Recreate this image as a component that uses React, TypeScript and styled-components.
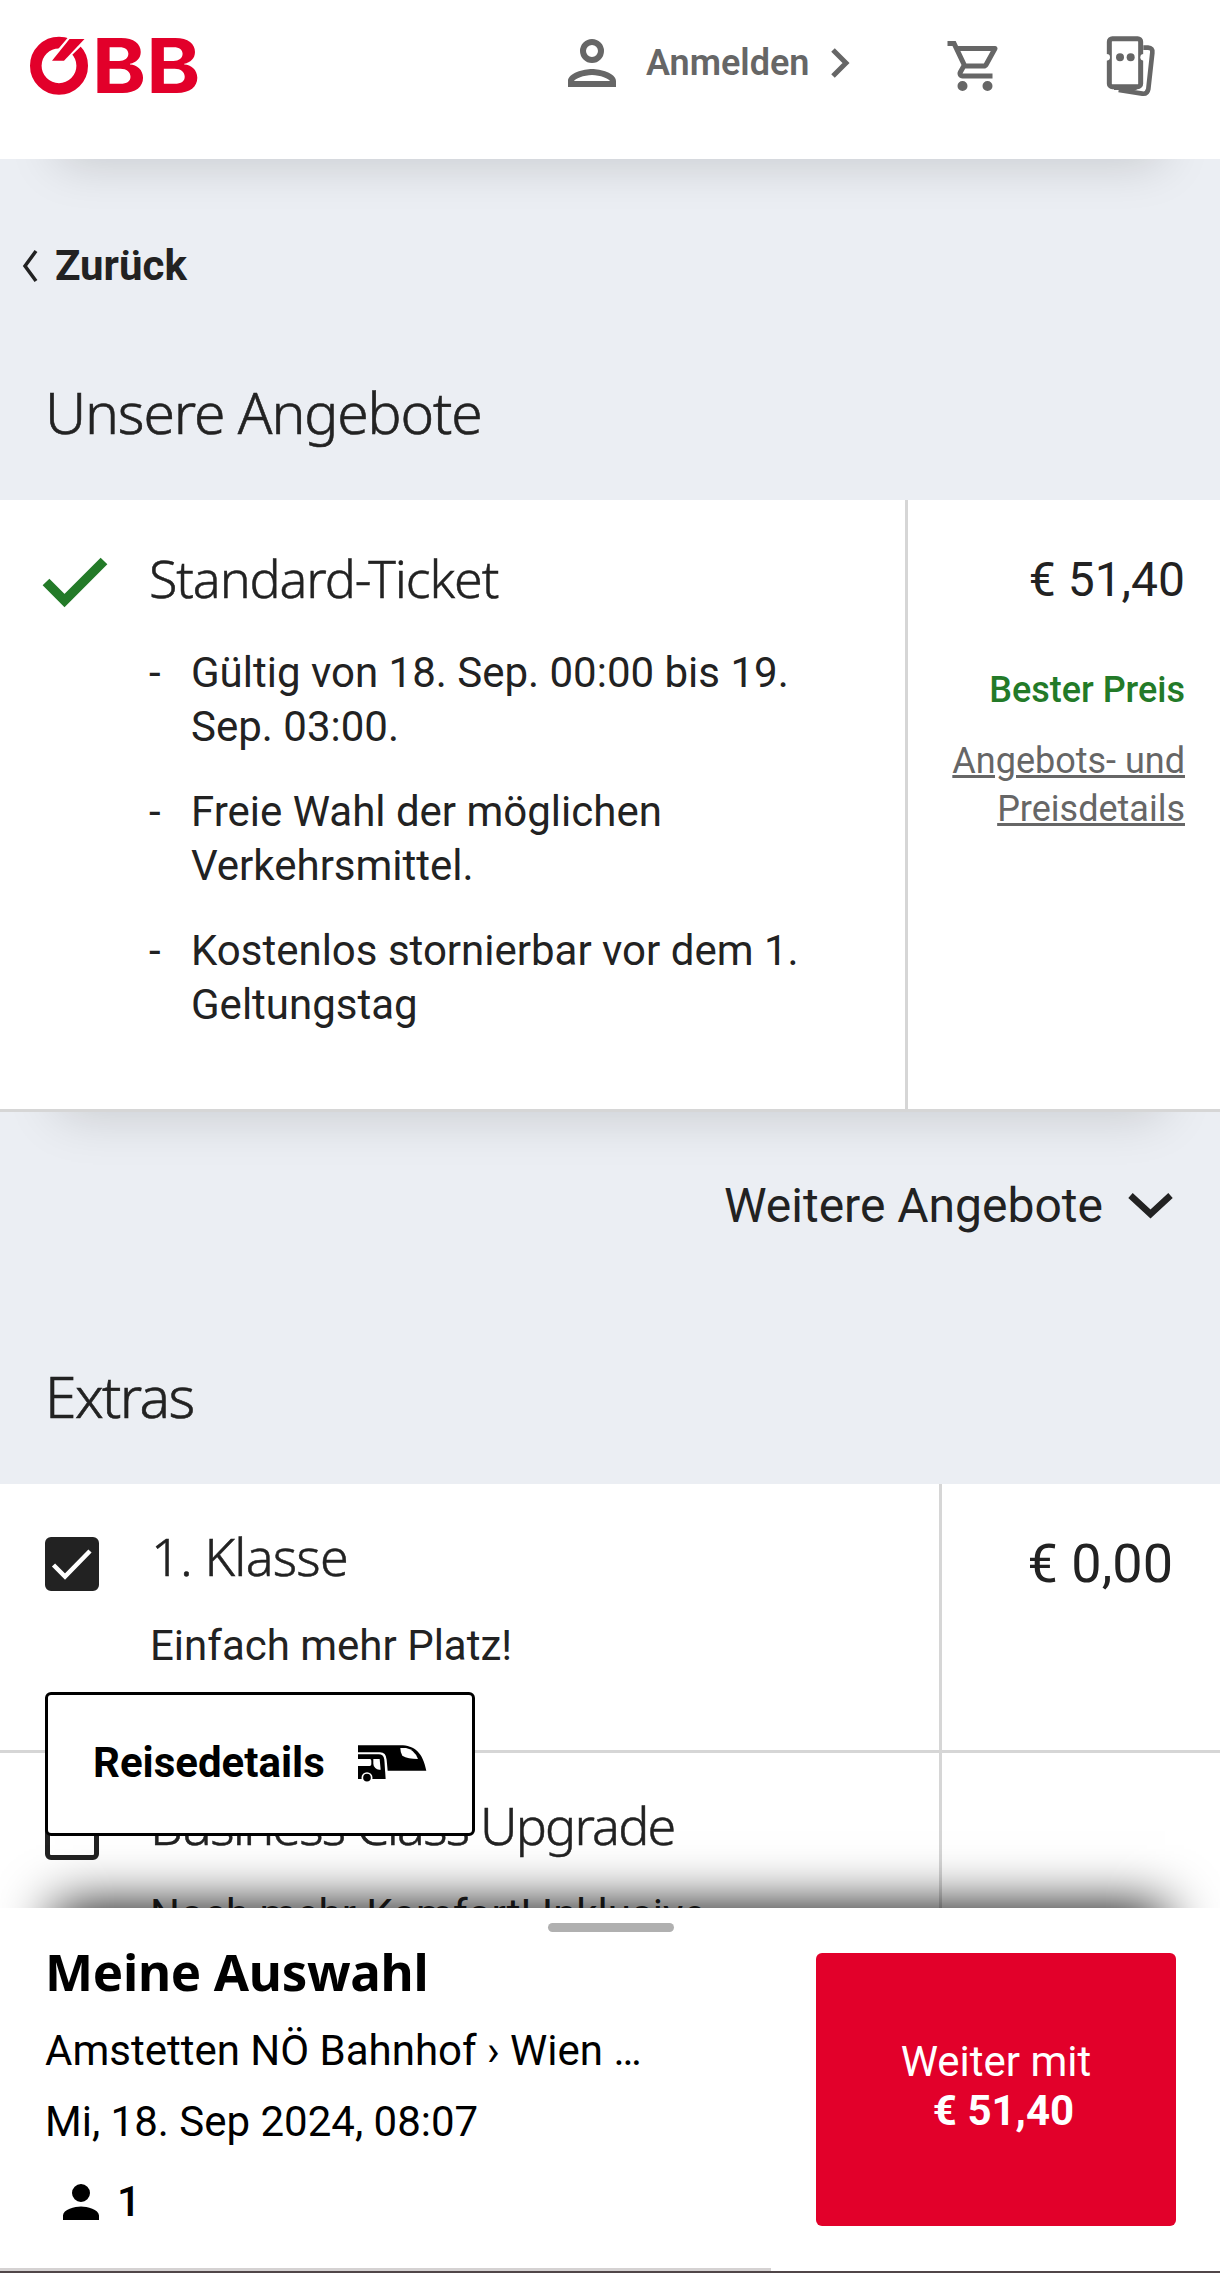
import React from "react";
import styled, { createGlobalStyle } from "styled-components";

const GlobalStyle = createGlobalStyle`
  *, *::before, *::after { box-sizing: border-box; }
  body { margin: 0; background: #ebeef3; }
`;
const heading = `"Noto Sans", "Open Sans", sans-serif`;
const ink = "#222222";
const line = "#d6d6d6";

const Page = styled.div`
  position: relative;
  width: 1220px;
  height: 2273px;
  overflow: hidden;
  background: #ebeef3;
  color: ${ink};
  font-family: Roboto, "Liberation Sans", sans-serif;
  font-size: 42px;
  line-height: 54px;
  svg { display: block; flex: none; overflow: visible; }
`;
const Header = styled.header`
  position: relative;
  display: flex;
  align-items: flex-start;
  height: 159px;
  padding-left: 28px;
  background: #fff;
  color: #666;
  box-shadow: 0 60px 50px -58px rgba(0, 0, 0, 0.18);
`;
const HeaderItem = styled.div<{ $left: number; $top: number }>`
  margin: ${(p) => p.$top}px 0 0 ${(p) => p.$left}px;
`;
const LoginLabel = styled.span`
  margin: 39px 0 0 18px;
  width: 164px;
  font-size: 36px;
  line-height: 48px;
  font-weight: 600;
  white-space: nowrap;
`;
const BackLink = styled.a`
  display: flex;
  align-items: center;
  gap: 17px;
  padding: 82px 0 0 22px;
  font-weight: 700;
  line-height: 50px;
`;
const SectionTitle = styled.h2<{ $gap: number; $spacing: number }>`
  margin: ${(p) => p.$gap}px 0 0;
  padding: 0 0 48px 45px;
  font: 300 57px/80px ${heading};
  letter-spacing: ${(p) => p.$spacing}px;
  -webkit-text-stroke: 0.6px ${ink};
`;
const Offer = styled.section`
  display: grid;
  grid-template-columns: 905px 1fr;
  height: 612px;
  background: #fff;
  border-bottom: 3px solid ${line};
  box-shadow: 0 60px 50px -58px rgba(0, 0, 0, 0.16);
`;
const OfferBody = styled.div`
  display: flex;
  padding: 43px 60px 0 43px;
`;
const OfferCheck = styled.div`
  width: 106px;
  padding-top: 15px;
`;
const ItemTitle = styled.h3<{ $spacing: number; $indent?: number }>`
  margin: 0 0 0 ${(p) => p.$indent ?? 0}px;
  font: 300 52px/70px ${heading};
  letter-spacing: ${(p) => p.$spacing}px;
  white-space: nowrap;
  -webkit-text-stroke: 0.5px ${ink};
`;
const Facts = styled.ul`
  display: flex;
  flex-direction: column;
  gap: 31px;
  margin: 33px 0 0;
  padding: 0;
  list-style: none;
`;
const Fact = styled.li`
  display: grid;
  grid-template-columns: 42px 1fr;
  white-space: pre;
`;
const OfferPrice = styled.div`
  display: flex;
  flex-direction: column;
  align-items: flex-end;
  padding: 50px 35px 0 0;
  border-left: 3px solid ${line};
  font-size: 36px;
  line-height: 48px;
  text-align: right;
`;
const Price = styled.div`
  font-size: 48px;
  line-height: 60px;
`;
const Best = styled.div`
  margin-top: 56px;
  color: #237a28;
  font-weight: 500;
`;
const DetailsLink = styled.a`
  margin-top: 23px;
  color: #666;
  text-decoration: underline;
  text-decoration-thickness: 3px;
  white-space: pre;
`;
const MoreOffers = styled.div`
  display: flex;
  justify-content: flex-end;
  align-items: center;
  gap: 25px;
  padding: 64px 47px 0 0;
  font-size: 48px;
  line-height: 60px;
`;
const Extra = styled.section`
  display: grid;
  grid-template-columns: 939px 1fr;
  height: 269px;
  background: #fff;
  border-bottom: 3px solid ${line};
`;
const ExtraBody = styled.div`
  display: flex;
  gap: 51px;
  padding: 37px 0 0 45px;
`;
const Checkbox = styled.div<{ $checked?: boolean }>`
  display: flex;
  align-items: center;
  justify-content: center;
  flex: none;
  width: 54px;
  height: 54px;
  margin-top: 16px;
  border: 5px solid ${ink};
  border-radius: 6px;
  background: ${(p) => (p.$checked ? ink : "#fff")};
`;
const ExtraText = styled.p`
  margin: 28px 0 0;
  white-space: nowrap;
`;
const ExtraPrice = styled.div`
  padding: 50px 47px 0 0;
  border-left: 3px solid ${line};
  font-size: 54px;
  line-height: 60px;
  text-align: right;
`;
const TripButton = styled.button`
  position: absolute;
  left: 45px;
  top: 1692px;
  display: flex;
  align-items: center;
  width: 430px;
  height: 144px;
  padding: 0 0 2px 45px;
  gap: 33px;
  border: 3px solid #000;
  border-radius: 6px;
  background: #fff;
  color: #000;
  font: 700 42px/54px Roboto, sans-serif;
`;
const Sheet = styled.footer`
  position: absolute;
  left: 0;
  right: 0;
  bottom: 0;
  height: 365px;
  background: #fff;
  color: #000;
  border-bottom: 2px solid #504648;
  box-shadow: 0 -55px 52px -55px #000;
`;
const Handle = styled.div`
  width: 126px;
  height: 9px;
  margin: 15px 0 0 548px;
  border-radius: 5px;
  background: #b0b0b0;
`;
const SheetRow = styled.div`
  display: flex;
  justify-content: space-between;
  padding: 0 44px 0 45px;
`;
const SheetTitle = styled.h2`
  margin: 4px 0 0;
  font: 700 51px/70px ${heading};
  letter-spacing: -0.3px;
`;
const TripLine = styled.div<{ $gap: number }>`
  margin-top: ${(p) => p.$gap}px;
  white-space: nowrap;
`;
const Travellers = styled.div`
  display: flex;
  align-items: center;
  gap: 9px;
  margin-top: 26px;
  padding-left: 9px;
  font-weight: 500;
`;
const Continue = styled.button`
  display: flex;
  flex-direction: column;
  align-items: center;
  width: 360px;
  height: 273px;
  margin-top: 21px;
  padding: 84px 0 0;
  border: 0;
  border-radius: 6px;
  background: #e2002a;
  color: #fff;
  font: 400 42px/49px Roboto, sans-serif;
`;
const ContinuePrice = styled.strong`
  padding-left: 15px;
`;
const Progress = styled.div`
  position: absolute;
  left: 0;
  bottom: 0;
  width: 771px;
  height: 3px;
  background: #d5d2d2;
`;

const Logo = () => (
  <svg width="180" height="72" viewBox="28 26 180 72">
    <circle cx="59" cy="65.8" r="23.2" fill="none" stroke="#e2002a" strokeWidth="11.6" />
    <path d="M70 39H85L62.7 60.5H51.7Z" fill="#fff" stroke="#fff" strokeWidth="5" />
    <path d="M69.5 39H84.5L64 60.8H52Z" fill="#e2002a" />
    <text
      x="92"
      y="93.3"
      textLength="108.500"
      lengthAdjust="spacingAndGlyphs"
      fontFamily="Inter, sans-serif"
      fontWeight="700"
      fontSize="75"
      fill="#e2002a"
    >
      BB
    </text>
  </svg>
);
const TicketIcon = () => (
  <svg width="50" height="62" viewBox="528 44 150 186" fill="none" stroke="#666" strokeWidth="14">
    <path d="M640 82H654Q669 83 667 97L655 206Q652 222 637 220L566 209" />
    <rect x="538" y="55" width="94" height="144" rx="9" fill="#fff" strokeWidth="15" />
    <path d="M552 202H620" />
    <g fill="#fff" stroke="none">
      <circle cx="530" cy="111" r="10" />
      <circle cx="641" cy="111" r="10" />
    </g>
    <g fill="#666" stroke="none">
      <circle cx="570" cy="111" r="12" />
      <circle cx="602" cy="111" r="12" />
    </g>
  </svg>
);
const TrainIcon = () => (
  <svg width="68.3" height="37" viewBox="38 48 205 111">
    <path d="M38 49H165C208 49 233 72 243 125H127L124 92Q122 70 104 70H38Z" />
    <path d="M165 57H182Q207 61 218 90Q188 90 171 80Q165 70 165 57Z" fill="#fff" />
    <path d="M38 76H100Q115 76 117 92L121 150H38Z" />
    <path d="M38 90H74Q78 90 78 95V106Q78 111 73 111H38ZM84 90H103L106 122Q96 124 90 117Q84 112 84 104Z" fill="#fff" />
    <circle cx="65" cy="146" r="14" stroke="#fff" strokeWidth="5" />
  </svg>
);

export default function App() {
  return (
    <Page>
      <GlobalStyle />
      <Header>
        <HeaderItem $left={0} $top={26}><Logo /></HeaderItem>
        <HeaderItem $left={348} $top={27}>
          <svg width="72" height="72" viewBox="0 0 24 24" fill="#666">
            <path d="M12 6a2 2 0 1 1 0 4 2 2 0 0 1 0-4m0 10c2.7 0 5.8 1.3 6 2H6c.2-.7 3.3-2 6-2m0-12a4 4 0 1 0 0 8 4 4 0 0 0 0-8m0 10c-2.7 0-8 1.3-8 4v2h16v-2c0-2.700-5.300-4-8-4" />
          </svg>
        </HeaderItem>
        <LoginLabel>Anmelden</LoginLabel>
        <HeaderItem $left={20} $top={48}>
          <svg width="21" height="30" viewBox="0 0 21 30" fill="none" stroke="#666" strokeWidth="5"><path d="M3 2L16 15L3 28" /></svg>
        </HeaderItem>
        <HeaderItem $left={94} $top={36}>
          <svg width="60" height="60" viewBox="0 0 24 24" fill="#666">
            <path d="M15.550 13c.75 0 1.410-.41 1.750-1.030l3.580-6.490A.996.996 0 0 0 20.010 4H5.210l-.94-2H1v2h2l3.600 7.590-1.350 2.440C4.520 15.370 5.480 17 7 17h12v-2H7l1.100-2zM6.160 6h12.150l-2.760 5H8.530zM7 18a2 2 0 1 0 0 4 2 2 0 0 0 0-4m10 0a2 2 0 1 0 0 4 2 2 0 0 0 0-4" />
          </svg>
        </HeaderItem>
        <HeaderItem $left={101} $top={35}><TicketIcon /></HeaderItem>
      </Header>

      <BackLink>
        <svg width="16" height="30" viewBox="0 0 16 30" fill="none" stroke={ink} strokeWidth="3.500"><path d="M14 0L3 15L14 30" /></svg>
        Zurück
      </BackLink>
      <SectionTitle $gap={81} $spacing={-1.15}>Unsere Angebote</SectionTitle>

      <Offer>
        <OfferBody>
          <OfferCheck>
            <svg width="64" height="49" viewBox="0 0 64 49" fill="none" stroke="#237a28" strokeWidth="9.500"><path d="M3 24L21.500 42.500L61 3" /></svg>
          </OfferCheck>
          <div>
            <ItemTitle $spacing={-1.1}>Standard-Ticket</ItemTitle>
            <Facts>
              <Fact><span>-</span><span>{"Gültig von 18. Sep. 00:00 bis 19.\nSep. 03:00."}</span></Fact>
              <Fact><span>-</span><span>{"Freie Wahl der möglichen\nVerkehrsmittel."}</span></Fact>
              <Fact><span>-</span><span>{"Kostenlos stornierbar vor dem 1.\nGeltungstag"}</span></Fact>
            </Facts>
          </div>
        </OfferBody>
        <OfferPrice>
          <Price>€ 51,40</Price>
          <Best>Bester Preis</Best>
          <DetailsLink>{"Angebots- und\nPreisdetails"}</DetailsLink>
        </OfferPrice>
      </Offer>

      <MoreOffers>
        Weitere Angebote
        <svg width="45" height="26" viewBox="0 0 45 26" fill="none" stroke={ink} strokeWidth="6.500"><path d="M2.500 2.500L22.500 21L42.500 2.500" /></svg>
      </MoreOffers>
      <SectionTitle $gap={120} $spacing={-1.6}>Extras</SectionTitle>

      <Extra>
        <ExtraBody>
          <Checkbox $checked>
            <svg width="40" height="32" viewBox="0 0 40 32" fill="none" stroke="#fff" strokeWidth="4.500"><path d="M1.500 17L13 28.500L38 3" /></svg>
          </Checkbox>
          <div>
            <ItemTitle $spacing={-0.8} $indent={1}>1. Klasse</ItemTitle>
            <ExtraText>Einfach mehr Platz!</ExtraText>
          </div>
        </ExtraBody>
        <ExtraPrice>€ 0,00</ExtraPrice>
      </Extra>
      <Extra>
        <ExtraBody>
          <Checkbox />
          <div>
            <ItemTitle $spacing={-1.8}>Business Class Upgrade</ItemTitle>
            <ExtraText>Noch mehr Komfort! Inklusive</ExtraText>
          </div>
        </ExtraBody>
        <ExtraPrice />
      </Extra>

      <TripButton>Reisedetails<TrainIcon /></TripButton>

      <Sheet>
        <Handle />
        <SheetRow>
          <div>
            <SheetTitle>Meine Auswahl</SheetTitle>
            <TripLine $gap={18}>Amstetten NÖ Bahnhof › Wien …</TripLine>
            <TripLine $gap={17}>Mi, 18. Sep 2024, 08:07</TripLine>
            <Travellers>
              <svg width="54" height="54" viewBox="0 0 24 24"><path d="M12 12a4 4 0 1 0 0-8 4 4 0 0 0 0 8m0 2c-2.670 0-8 1.340-8 4v2h16v-2c0-2.660-5.330-4-8-4" /></svg>
              1
            </Travellers>
          </div>
          <Continue>Weiter mit<ContinuePrice>€ 51,40</ContinuePrice></Continue>
        </SheetRow>
        <Progress />
      </Sheet>
    </Page>
  );
}
